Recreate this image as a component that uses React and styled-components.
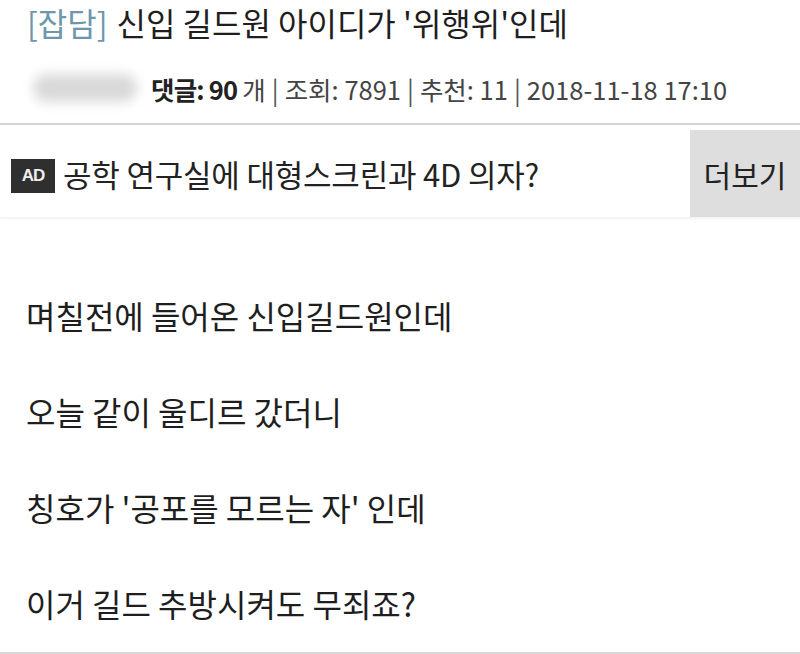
import React from 'react'
import styled, { createGlobalStyle } from 'styled-components'

const Global = createGlobalStyle`
  html, body {
    margin: 0;
    background: #fff;
    font-family: "Noto Sans CJK KR", "Noto Sans", sans-serif;
    color: #222;
  }
`

const Page = styled.div`
  width: 800px;
  height: 654px;
  overflow: hidden;
  display: flex;
  flex-direction: column;
  border-bottom: 2px solid #d8d8d8;
  box-sizing: border-box;
`

const Header = styled.header`
  padding: 0 0 0 27px;
  display: flex;
  flex-direction: column;
  border-bottom: 2px solid #d4d4d4;
`

const Title = styled.h1`
  margin: 0;
  height: 46px;
  font-size: 32px;
  font-weight: 400;
  line-height: 46px;
  margin-top: -1px;
  color: #1e1e1e;
  white-space: nowrap;
`

const Category = styled.span`
  color: #6e96ad;
  margin-right: 9px;
`

const Meta = styled.div`
  height: 78px;
  display: flex;
  align-items: center;
  font-size: 25.5px;
  color: #444;
  white-space: nowrap;
  padding-top: 8px;
  box-sizing: border-box;
`

const Author = styled.span`
  display: inline-block;
  width: 104px;
  height: 28px;
  margin: 0 14px 0 6px;
  border-radius: 14px;
  background: #d9d9d9;
  filter: blur(6px);
`

const Strong = styled.b`
  color: #222;
  font-weight: 700;
  margin-right: 5px;
  letter-spacing: -0.8px;
`

const Sep = styled.span`
  margin: 0 6px;
  color: #555;
`

const AdRow = styled.div`
  height: 87px;
  display: flex;
  align-items: stretch;
  margin-top: 5px;
  box-shadow: 0 2px 2px rgba(0, 0, 0, 0.05);
`

const AdText = styled.div`
  flex: 1;
  display: flex;
  align-items: center;
  padding-left: 11px;
  font-size: 31px;
  color: #222;
  letter-spacing: -0.2px;
  white-space: nowrap;
`

const Badge = styled.span`
  display: inline-flex;
  align-items: center;
  justify-content: center;
  width: 44px;
  height: 34px;
  margin: 4px 8px 0 0;
  background: #2f2f2f;
  color: #eee;
  font-family: "Liberation Sans", sans-serif;
  font-size: 17px;
  font-weight: 700;
  letter-spacing: -1px;
`

const MoreButton = styled.button`
  width: 110px;
  border: none;
  background: #dedede;
  font-family: inherit;
  font-size: 30px;
  color: #222;
  padding: 0;
  cursor: pointer;
`

const Body = styled.div`
  padding: 77px 0 0 26px;
  display: flex;
  flex-direction: column;
  gap: 54px;
`

const Line = styled.p`
  margin: 0;
  font-size: 32px;
  line-height: 42px;
  color: #1e1e1e;
  white-space: nowrap;
`

const lines = [
  '며칠전에 들어온 신입길드원인데',
  '오늘 같이 울디르 갔더니',
  "칭호가 '공포를 모르는 자' 인데",
  '이거 길드 추방시켜도 무죄죠?',
]

export default function App() {
  return (
    <>
      <Global />
      <Page>
        <Header>
          <Title>
            <Category>[잡담]</Category>신입 길드원 아이디가 '위행위'인데
          </Title>
          <Meta>
            <Author />
            <Strong>댓글: 90</Strong>개<Sep>|</Sep>조회: 7891<Sep>|</Sep>추천: 11
            <Sep>|</Sep>2018-11-18 17:10
          </Meta>
        </Header>
        <AdRow>
          <AdText>
            <Badge>AD</Badge>공학 연구실에 대형스크린과 4D 의자?
          </AdText>
          <MoreButton>더보기</MoreButton>
        </AdRow>
        <Body>
          {lines.map((l) => (
            <Line key={l}>{l}</Line>
          ))}
        </Body>
      </Page>
    </>
  )
}
